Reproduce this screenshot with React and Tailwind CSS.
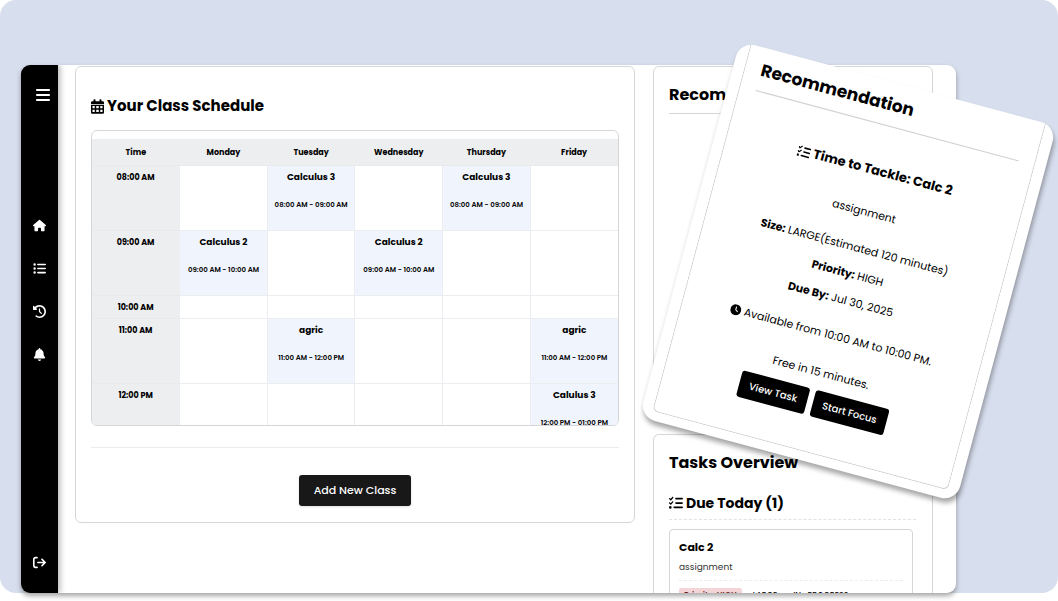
import { FaBars, FaHouse, FaListUl, FaClockRotateLeft, FaBell, FaArrowRightFromBracket, FaListCheck, FaClock } from "react-icons/fa6";

const days = ["Monday", "Tuesday", "Wednesday", "Thursday", "Friday"];

const rows = [
  { time: "08:00 AM", classes: { Tuesday: ["Calculus 3", "08:00 AM - 09:00 AM"], Thursday: ["Calculus 3", "08:00 AM - 09:00 AM"] } },
  { time: "09:00 AM", classes: { Monday: ["Calculus 2", "09:00 AM - 10:00 AM"], Wednesday: ["Calculus 2", "09:00 AM - 10:00 AM"] } },
  { time: "10:00 AM", classes: {} },
  { time: "11:00 AM", classes: { Tuesday: ["agric", "11:00 AM - 12:00 PM"], Friday: ["agric", "11:00 AM - 12:00 PM"] } },
  { time: "12:00 PM", classes: { Friday: ["Calulus 3", "12:00 PM - 01:00 PM"] } },
];

const links = [
  { label: "Home", Icon: FaHouse },
  { label: "Tasks", Icon: FaListUl },
  { label: "History", Icon: FaClockRotateLeft },
  { label: "Notifications", Icon: FaBell },
];

function CalendarIcon() {
  return (
    <svg viewBox="0 0 26 29" className="h-[15px] w-[13px]" fill="currentColor" aria-hidden="true">
      <rect x="5" y="0" width="4" height="8" rx="1.5" />
      <rect x="17" y="0" width="4" height="8" rx="1.5" />
      <path
        fillRule="evenodd"
        d="M2.500 4h21A2.500 2.500 0 0 1 26 6.500V9.500H0V6.500A2.500 2.500 0 0 1 2.500 4ZM0 11h26v15.500a2.500 2.500 0 0 1-2.500 2.500h-21A2.500 2.500 0 0 1 0 26.500ZM3 13.500v4.500h4.500v-4.500ZM10.500 13.500v4.500h5v-4.500ZM18.500 13.500v4.500h4.500v-4.500ZM3 21v4.500h4.500V21ZM10.500 21v4.500h5V21ZM18.500 21v4.500h4.500V21Z"
      />
    </svg>
  );
}

function Sidebar() {
  return (
    <aside className="z-10 flex w-[37px] shrink-0 flex-col items-center bg-black pb-6 text-white shadow-[2px_0_6px_rgba(0,0,0,0.3)]">
      <button aria-label="Toggle menu" className="mt-[22px] ml-[6px] text-base">
        <FaBars />
      </button>
      <nav className="mt-[116px] flex flex-1 flex-col items-center gap-[30px] text-[13px]">
        {links.map(({ label, Icon }) => (
          <a key={label} href="#" aria-label={label} className="block">
            <Icon />
          </a>
        ))}
      </nav>
      <a href="#" aria-label="Log out" className="text-[13px]">
        <FaArrowRightFromBracket />
      </a>
    </aside>
  );
}

function Schedule() {
  return (
    <section className="min-w-0 flex-1 rounded-md border border-[#d6d6d8] px-[15px] pb-4">
      <h2 className="mt-7 flex items-center gap-[3px] text-[15px] leading-[22px] font-bold">
        <CalendarIcon />
        Your Class Schedule
      </h2>
      <div className="mt-[13px] h-[296px] overflow-hidden rounded-md border border-[#d6d6d8] pt-2">
        <table className="w-full table-fixed border-collapse text-center">
          <thead>
            <tr className="h-[26px] bg-[#edeef0] text-[8px]">
              {["Time", ...days].map((name) => (
                <th key={name} scope="col" className="border-b border-[#e9eaec] pt-[2px] font-bold">{name}</th>
              ))}
            </tr>
          </thead>
          <tbody>
            {rows.map(({ time, classes }) => (
              <tr key={time} className="h-[23px]">
                <th scope="row" className="border-b border-[#e9eaec] bg-[#edeef0] pt-[6px] align-top text-[8px] leading-3 font-bold">{time}</th>
                {days.map((day) =>
                  classes[day] ? (
                    <td key={day} className="h-[65px] border border-[#ecedf0] bg-[#f0f5fd] p-0 pt-1 align-top last:border-r-0">
                      <p className="text-[9px] leading-[14px] font-bold">{classes[day][0]}</p>
                      <p className="mt-[15px] text-[7px] leading-3 font-semibold whitespace-nowrap">{classes[day][1]}</p>
                    </td>
                  ) : (
                    <td key={day} className="border border-[#ecedf0] p-0 last:border-r-0" />
                  )
                )}
              </tr>
            ))}
          </tbody>
        </table>
      </div>
      <div className="mt-[21px] border-t border-[#ececee] pt-[27px] text-center">
        <button className="h-[31px] rounded-[3px] bg-[#181818] px-[15px] text-[11px] font-medium text-white shadow-sm">Add New Class</button>
      </div>
    </section>
  );
}

function TasksOverview() {
  return (
    <section className="min-h-0 flex-1 overflow-hidden rounded-t-md border border-b-0 border-[#d6d6d8] px-[15px]">
      <h2 className="mt-4 text-base leading-6 font-bold">Tasks Overview</h2>
      <h3 className="mt-4 mr-px flex items-center gap-[3px] border-b border-dashed border-[#e2e2e4] pb-1 text-sm leading-6 font-bold">
        <FaListCheck />
        Due Today (1)
      </h3>
      <article className="mt-[9px] mr-1 rounded-[4px] border border-[#d6d6d8] px-[9px] pt-[9px] pb-4">
        <h4 className="text-[11px] leading-4 font-bold">Calc 2</h4>
        <p className="mt-1 text-[9px] leading-4 text-[#333333]">assignment</p>
        <div className="mt-[5px] flex gap-[6px] border-t border-dashed border-[#ececee] pt-[7px] text-[8px] leading-4 font-medium">
          <span className="rounded-[2px] bg-[#f3d5d8] px-[5px] font-semibold text-[#721c24]">Priority: HIGH</span>
          <span className="px-[5px]">LARGE</span>
          <span className="px-[5px]">IN_PROGRESS</span>
        </div>
      </article>
    </section>
  );
}

function RecommendationCard() {
  return (
    <article className="absolute top-[77px] right-[46px] z-20 w-[328px] rotate-[15deg] rounded-2xl bg-white px-[11px] pb-[9px] shadow-[2px_4px_5px_rgba(0,0,0,0.35)]">
      <div className="h-[380px] rounded-b-md border-x border-b border-[#cfcfd1] px-4 pt-[10px] text-center text-[11px] leading-[18px]">
        <h2 className="border-b border-[#cfcfd1] pb-[9px] text-left text-[17px] leading-6 font-bold">Recommendation</h2>
        <h3 className="mt-9 flex items-center justify-center gap-[3px] text-[13px] leading-5 font-bold">
          <FaListCheck />
          Time to Tackle: Calc 2
        </h3>
        <p className="mt-[23px]">assignment</p>
        <p className="mt-[19px]"><strong>Size:</strong> LARGE(Estimated 120 minutes)</p>
        <p className="mt-[9px]"><strong>Priority:</strong> HIGH</p>
        <p className="mt-[9px]"><strong>Due By:</strong> Jul 30, 2025</p>
        <p className="mt-[19px] flex items-center justify-center gap-[3px] whitespace-nowrap">
          <FaClock />
          Available from 10:00 AM to 10:00 PM.
        </p>
        <p className="mt-[21px]">Free in 15 minutes.</p>
        <div className="mt-[9px] flex justify-center gap-[6px] text-[10px] font-medium text-white">
          <button className="h-[27px] rounded-[3px] bg-black px-[10px]">View Task</button>
          <button className="h-[27px] rounded-[3px] bg-black px-[10px]">Start Focus</button>
        </div>
      </div>
    </article>
  );
}

export default function App() {
  return (
    <div className="h-screen overflow-hidden bg-white pb-2 font-['Poppins','Inter',sans-serif] text-black">
      <div className="relative h-full rounded-2xl bg-[#d7deed] pt-[65px] pr-[102px] pl-[21px]">
        <div className="flex h-full overflow-hidden rounded-[9px] bg-white shadow-[0_3px_5px_rgba(0,0,0,0.35)]">
          <Sidebar />
          <main className="flex min-w-0 flex-1 items-start gap-[18px] pt-px pr-[23px] pl-[17px]">
            <Schedule />
            <div className="flex h-full w-[280px] shrink-0 flex-col gap-[19px]">
              <section className="h-[349px] rounded-md border border-[#d6d6d8] px-[15px]">
                <h2 className="mt-4 border-b border-[#d6d6d8] pb-[6px] text-base leading-6 font-bold">Recommendation</h2>
              </section>
              <TasksOverview />
            </div>
          </main>
        </div>
        <RecommendationCard />
      </div>
    </div>
  );
}
